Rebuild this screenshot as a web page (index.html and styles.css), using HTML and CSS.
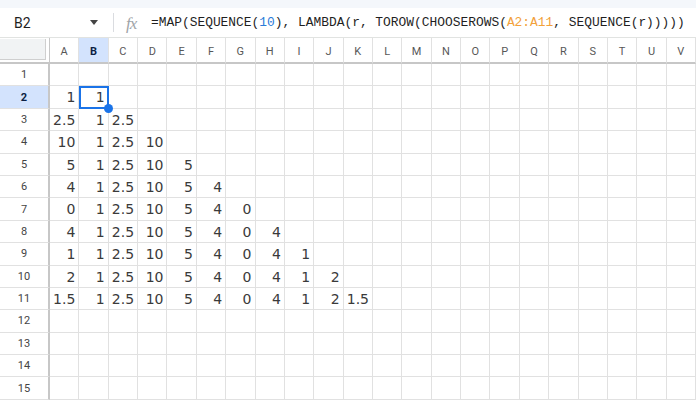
FILE: index.html
```html
<!DOCTYPE html>
<html lang="en">
<head>
    <meta charset="UTF-8">
    <title>Sheet</title>
    <link rel="stylesheet" href="styles.css">
</head>
<body>
    <div class="topstrip"></div>
    <div class="formula-bar">
        <div class="name-box">
            <span class="cell-ref">B2</span>
            <span class="caret"></span>
        </div>
        <div class="sep"></div>
        <span class="fx">fx</span>
        <div class="formula">=MAP(SEQUENCE(<span class="num">10</span>), LAMBDA(r, TOROW(CHOOSEROWS(<span class="range">A2:A11</span>, SEQUENCE(r)))))</div>
    </div>
    <div class="grid" id="grid"></div>

    <script>
        const cols = 'ABCDEFGHIJKLMNOPQRSTUV'.split('');
        const data = {
            2: ['1', '1'],
            3: ['2.5', '1', '2.5'],
            4: ['10', '1', '2.5', '10'],
            5: ['5', '1', '2.5', '10', '5'],
            6: ['4', '1', '2.5', '10', '5', '4'],
            7: ['0', '1', '2.5', '10', '5', '4', '0'],
            8: ['4', '1', '2.5', '10', '5', '4', '0', '4'],
            9: ['1', '1', '2.5', '10', '5', '4', '0', '4', '1'],
            10: ['2', '1', '2.5', '10', '5', '4', '0', '4', '1', '2'],
            11: ['1.5', '1', '2.5', '10', '5', '4', '0', '4', '1', '2', '1.5']
        };
        const grid = document.getElementById('grid');

        function cell(cls, text) {
            const d = document.createElement('div');
            d.className = cls;
            if (text) d.textContent = text;
            grid.appendChild(d);
            return d;
        }

        // header row
        const corner = cell('corner');
        corner.appendChild(document.createElement('div')).className = 'corner-box';
        cols.forEach(c => cell(c === 'B' ? 'col-head active' : 'col-head', c));

        for (let r = 1; r <= 15; r++) {
            cell(r === 2 ? 'row-head active' : 'row-head', String(r));
            const vals = data[r] || [];
            cols.forEach((c, i) => {
                const d = cell('cell', vals[i]);
                if (r === 2 && c === 'B') {
                    d.classList.add('selected');
                    d.appendChild(document.createElement('span')).className = 'handle';
                }
            });
        }
    </script>
</body>
</html>
```

FILE: styles.css
```css
body {
    margin: 0;
    width: 696px;
    height: 402px;
    overflow: hidden;
    background: #fff;
    font-family: Roboto, "Noto Sans", sans-serif;
}

.topstrip {
    height: 8px;
    background-color: #f4f7fb;
}

.formula-bar {
    height: 30px;
    display: flex;
    align-items: center;
    border-bottom: 1px solid #e1e3e1;
    box-sizing: border-box;
}

.name-box {
    width: 106px;
    display: flex;
    align-items: center;
    justify-content: space-between;
    padding: 0 8px 0 14px;
    box-sizing: border-box;
}

.cell-ref {
    font-size: 14px;
    color: #1f1f1f;
}

.caret {
    width: 0;
    height: 0;
    border-left: 4.5px solid transparent;
    border-right: 4.5px solid transparent;
    border-top: 5px solid #444;
}

.sep {
    width: 1px;
    height: 19px;
    background-color: #dadce0;
    margin: 0 12px 0 7px;
}

.fx {
    font-family: "Liberation Serif", serif;
    font-style: italic;
    font-size: 17px;
    color: #a0a4a8;
    width: 25px;
    letter-spacing: -1px;
    position: relative;
    top: 1px;
}

.formula {
    font-family: "Liberation Mono", monospace;
    font-size: 12.9px;
    color: #1f1f1f;
    white-space: nowrap;
}

.formula .num {
    color: #2a7bd8;
}

.formula .range {
    color: #f2a13a;
}

.grid {
    display: grid;
    grid-template-columns: 50px repeat(22, 1fr);
    grid-template-rows: 26px;
    grid-auto-rows: 22.4px;
}

.corner {
    background: #fff;
    border-bottom: 2px solid #c7c7c7;
    border-right: 1px solid #c7c7c7;
    box-sizing: border-box;
    padding-top: 1px;
}

.corner-box {
    width: 45px;
    height: 20px;
    background-color: #f1f3f4;
    border-right: 1px solid #cfcfcf;
    border-bottom: 1px solid #cfcfcf;
}

.col-head {
    border-right: 1px solid #e1e1e1;
    border-bottom: 2px solid #c7c7c7;
    box-sizing: border-box;
    font-size: 11px;
    color: #575757;
    display: flex;
    align-items: center;
    justify-content: center;
    padding-top: 2px;
}

.row-head {
    border-right: 2px solid #c7c7c7;
    border-bottom: 1px solid #e1e1e1;
    box-sizing: border-box;
    font-size: 11px;
    color: #444;
    display: flex;
    align-items: center;
    justify-content: center;
}

.active {
    background-color: #d3e3fd;
    color: #0b1f44;
    font-weight: bold;
}

.cell {
    position: relative;
    border-right: 1px solid #e1e1e1;
    border-bottom: 1px solid #e1e1e1;
    box-sizing: border-box;
    font-family: "DejaVu Sans", sans-serif;
    font-size: 14px;
    color: #3a3a3a;
    text-align: right;
    padding-right: 3px;
    line-height: 23px;
    white-space: nowrap;
}

.selected {
    outline: 2px solid #1a73e8;
    outline-offset: -2px;
    z-index: 2;
}

.handle {
    position: absolute;
    right: -5px;
    bottom: -5px;
    width: 9px;
    height: 9px;
    border-radius: 50%;
    background-color: #1a73e8;
}
```
